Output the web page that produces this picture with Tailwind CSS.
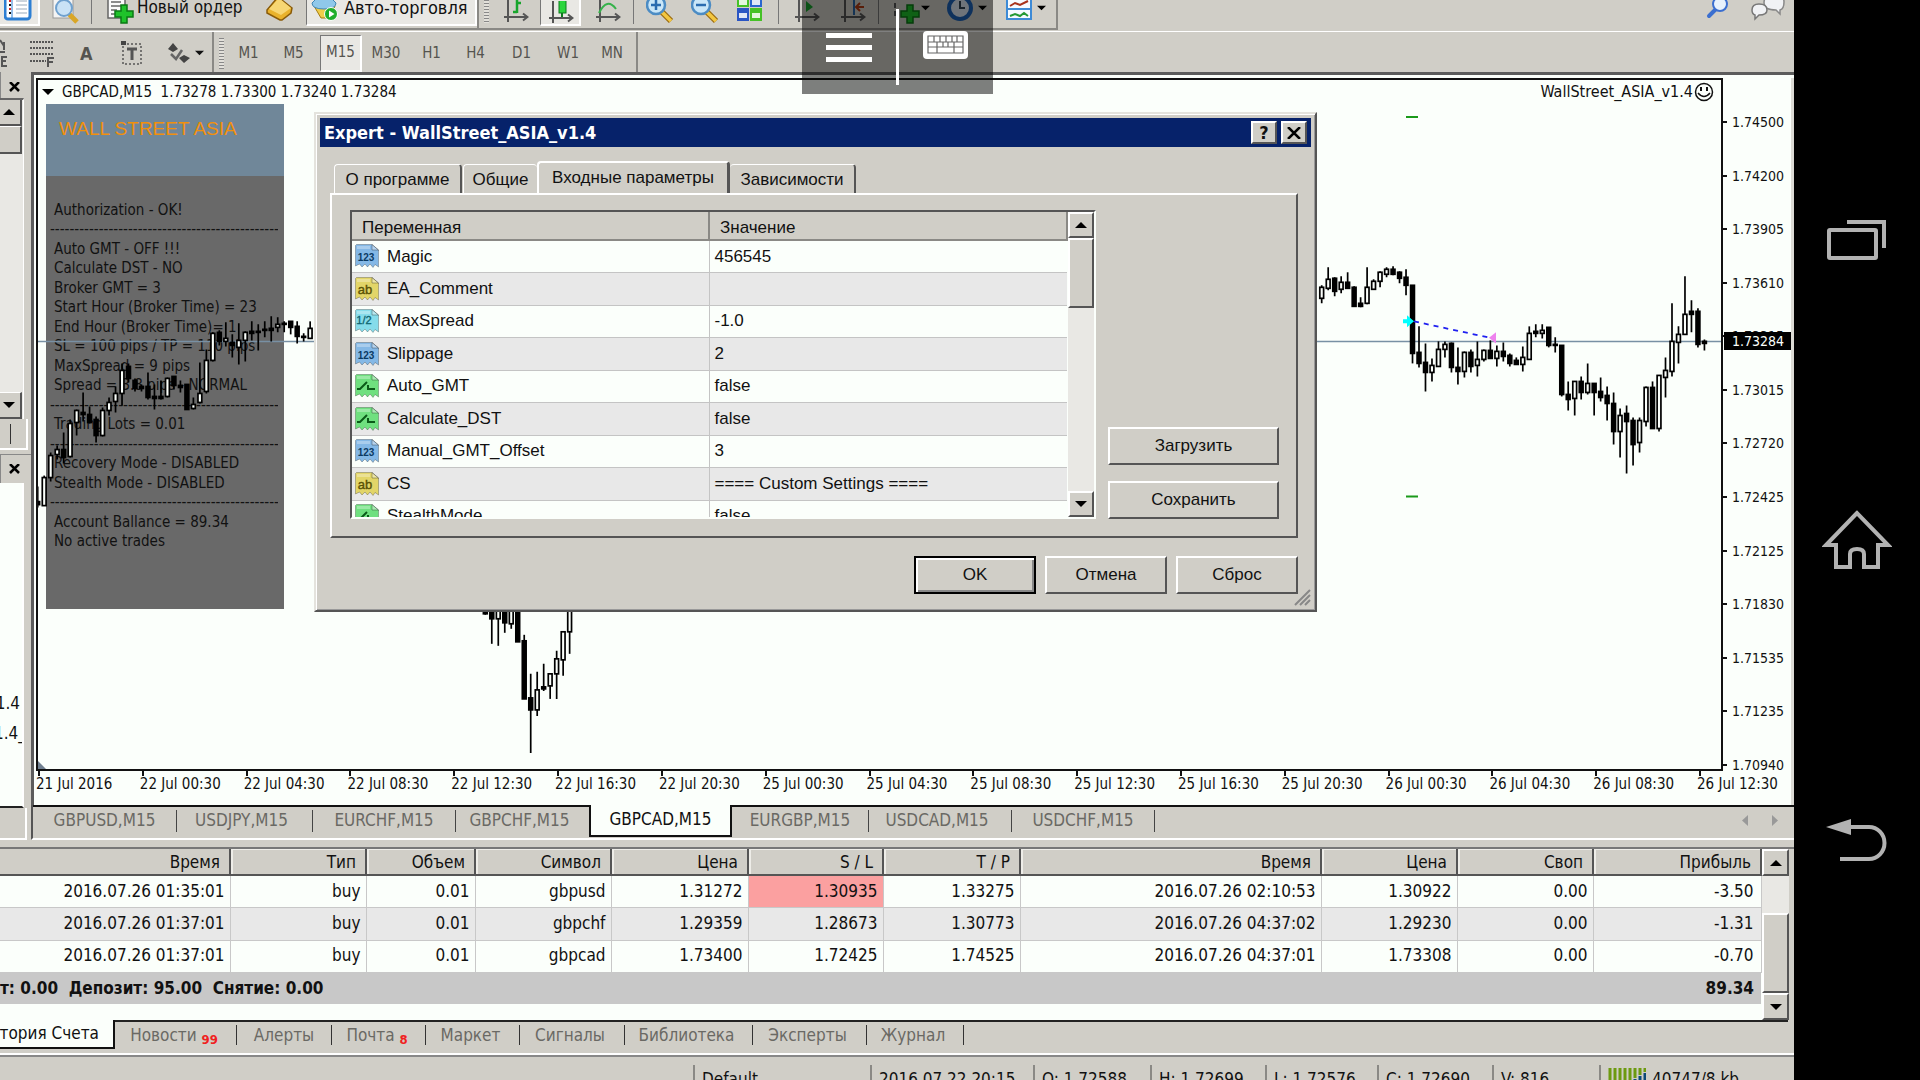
<!DOCTYPE html>
<html lang="ru">
<head>
  <meta charset="UTF-8" />
  <title>GBPCAD,M15</title>
  <script src="https://cdn.jsdelivr.net/npm/@tailwindcss/browser@4"></script>
</head>
<body class="flex h-screen overflow-hidden bg-black font-['DejaVu_Sans_Condensed','DejaVu_Sans',sans-serif] text-[17px] text-[#111]">

  <!-- shared icons -->
  <svg class="hidden">
    <symbol id="sheet" viewBox="0 0 26 26">
      <path d="M2.500 1.500H18L24.500 7V24L21 21.500L19 24.500L16 21L13.500 24L11 21L8 24L5.500 21L1.500 23V2.500Z" fill="currentColor" stroke="#000" stroke-opacity=".25" />
      <path d="M18 1.500L18 7H24.500Z" fill="#fff" fill-opacity=".4" stroke="#000" stroke-opacity=".3" />
      <path d="M3 3H16V6H3Z" fill="#fff" fill-opacity=".3" />
    </symbol>
    <symbol id="ico-int" viewBox="0 0 26 26">
      <use href="#sheet" color="#84b8e6" />
      <text x="12" y="18" font-size="10" font-weight="bold" text-anchor="middle" fill="#0b3a63">123</text>
    </symbol>
    <symbol id="ico-str" viewBox="0 0 26 26">
      <use href="#sheet" color="#e2d568" />
      <text x="11" y="18" font-size="13" text-anchor="middle" fill="#5a5205" stroke="#5a5205" stroke-width=".4">ab</text>
    </symbol>
    <symbol id="ico-dbl" viewBox="0 0 26 26">
      <use href="#sheet" color="#86dcea" />
      <text x="10" y="16" font-size="11" text-anchor="middle" fill="#0d6470" stroke="#0d6470" stroke-width=".3">1/2</text>
    </symbol>
    <symbol id="ico-bool" viewBox="0 0 26 26">
      <use href="#sheet" color="#6fe07f" />
      <path d="M3 16H6L13 9M14 12V16H21" fill="none" stroke="#0a5a18" stroke-width="2" />
    </symbol>
    <symbol id="up" viewBox="0 0 12 8"><path d="M6 1L12 7H0Z" /></symbol>
    <symbol id="down" viewBox="0 0 12 8"><path d="M0 1H12L6 7Z" /></symbol>
    <symbol id="axes" viewBox="0 0 26 28">
      <path d="M5 0V27M1 22H24M20 18.500L24.500 22L20 25.500" fill="none" stroke="#555" stroke-width="2" />
    </symbol>
    <symbol id="lens" viewBox="0 0 28 28">
      <path d="M16 15L25 24" stroke="#9a6c10" stroke-width="6" />
      <path d="M16 15L25 24" stroke="#f3c741" stroke-width="3.500" />
      <circle cx="10" cy="8" r="9" fill="#c9e6f8" stroke="#4c8cc4" stroke-width="2.500" />
    </symbol>
    <symbol id="plus" viewBox="0 0 20 20">
      <path d="M7 1H13V7H19V13H13V19H7V13H1V7H7Z" fill="#1fc32a" stroke="#0a7a14" stroke-width="1.500" />
    </symbol>
  </svg>

  <main class="relative flex min-w-0 flex-1 flex-col overflow-hidden bg-[#d0cec7]">

    <!-- main toolbar -->
    <div class="flex h-[31px] shrink-0 items-start">
      <div class="flex h-[30px] w-[479px] shrink-0 items-start border-r-2 border-b-2 border-[#8a8985]">
        <button aria-label="Обзор рынка" class="h-[26px] w-[40px] border-r-2 border-b-2 border-white bg-[#e9e8e4]">
          <svg class="ml-1 h-[26px] w-[28px]" viewBox="0 0 28 26"><rect x="1" y="-8" width="25" height="27" rx="3" fill="#fff" stroke="#2d7fd3" stroke-width="3" /><path d="M8 -4V18" stroke="#2d7fd3" stroke-width="1" /><path d="M12 1H23M12 5H23M12 9H23M12 13H23" stroke="#9ab" stroke-width="1" /><path d="M5 1h2M5 9h2" stroke="#d22" stroke-width="2" /><path d="M5 5h2M5 13h2" stroke="#111" stroke-width="2" /></svg>
        </button>
        <button aria-label="Окно данных" class="ml-3 h-[26px] w-[28px]">
          <svg class="h-[26px] w-[28px]" viewBox="0 0 28 26"><rect x="1" y="-8" width="20" height="26" fill="#f4f4f4" stroke="#999" /><path d="M17 14L25 22" stroke="#d9a627" stroke-width="5" /><circle cx="12" cy="8" r="8" fill="#c9e2f6" stroke="#6fa1cf" stroke-width="2" /></svg>
        </button>
        <span class="ml-[11px] h-[24px] w-px bg-[#777]"></span>
        <button class="ml-[15px] flex h-[26px] items-start gap-[3px] text-[17px] leading-[15px] whitespace-nowrap">
          <svg class="h-[26px] w-[27px]" viewBox="0 0 27 26"><path d="M1 -4H18V18H1Z" fill="#fafafa" stroke="#666" stroke-width="1.500" /><path d="M4 2H14M4 6H14M4 10H10M4 14H8" stroke="#666" stroke-width="1.500" /><use href="#plus" x="7" y="4" width="20" height="20" /></svg>
          Новый ордер
        </button>
        <button aria-label="MetaEditor" class="ml-auto h-[26px] w-[28px]">
          <svg class="h-[26px] w-[28px]" viewBox="0 0 28 26"><path d="M1 10L12 -3L26 8L25 13L16 20L14 20L1 13Z" fill="#e9b22c" stroke="#8a5b08" stroke-width="1.500" /><path d="M3 9L13 -2L25 8L15 15Z" fill="#f7d673" /></svg>
        </button>
        <button class="ml-3 flex h-[26px] w-[171px] items-start gap-[5px] border-r-2 border-b-2 border-l border-white border-l-[#777] bg-[#e9e8e4] pl-1 text-[18px] leading-[15px] whitespace-nowrap">
          <svg class="h-[26px] w-[28px] shrink-0" viewBox="0 0 28 26"><path d="M3 6L10 18H19L24 6Z" fill="#f1ce4b" stroke="#a57c10" /><path d="M1 3Q1 9 13 9Q25 9 25 3L20 -2H6Z" fill="#8fc8ea" stroke="#3f86b5" /><circle cx="20" cy="14" r="6.500" fill="#1fae2a" stroke="#fff" /><path d="M18 10.500V17.500L23.500 14Z" fill="#fff" /></svg>
          Авто-торговля
        </button>
      </div>
      <div class="flex h-[30px] w-[579px] shrink-0 items-start border-r-2 border-b-2 border-[#8a8985]">
        <span class="ml-[5px] h-[23px] w-[5px] bg-[repeating-linear-gradient(#888_0_1px,#e2e0da_1px_3px)]"></span>
        <button aria-label="Бары" class="ml-[14px] w-[26px]"><svg class="h-[22px] w-[26px]" viewBox="0 5 26 22"><use href="#axes" width="26" height="28" /><path d="M14 5V18M10 17H14M14 8H18" fill="none" stroke="#18a52c" stroke-width="2.500" /></svg></button>
        <button aria-label="Свечи" class="ml-[11px] h-[26px] w-[41px] border-r-2 border-b-2 border-l border-white border-l-[#777] bg-[#e9e8e4]"><svg class="ml-[7px] h-[22px] w-[26px]" viewBox="0 5 26 22"><use href="#axes" width="26" height="28" /><path d="M14 10V21" stroke="#0d7d1c" stroke-width="2" /><rect x="11" y="2" width="7" height="15" fill="#2bd63c" stroke="#0d7d1c" /></svg></button>
        <button aria-label="Линия" class="ml-[14px] w-[26px]"><svg class="h-[22px] w-[26px]" viewBox="0 5 26 22"><use href="#axes" width="26" height="28" /><path d="M4 18Q12 2 21 14" fill="none" stroke="#35b24a" stroke-width="2" /></svg></button>
        <span class="ml-[12px] h-[24px] w-px bg-[#777]"></span>
        <button aria-label="Увеличить" class="ml-[12px]"><svg class="h-[26px] w-[28px]" viewBox="0 3 28 26"><use href="#lens" width="28" height="28" /><path d="M5 8H15M10 3V13" stroke="#2a6cb0" stroke-width="2.500" /></svg></button>
        <button aria-label="Уменьшить" class="ml-[17px]"><svg class="h-[26px] w-[28px]" viewBox="0 3 28 26"><use href="#lens" width="28" height="28" /><path d="M5 8H15" stroke="#2a6cb0" stroke-width="2.500" /></svg></button>
        <button aria-label="Упорядочить" class="ml-[17px]"><svg class="h-[26px] w-[28px]" viewBox="0 0 28 26"><path d="M1 -5H13V7H1Z" fill="#45c126" /><path d="M14 -5H26V7H14Z" fill="#2a66cf" /><path d="M1 8H13V21H1Z" fill="#2a55c4" /><path d="M14 8H26V21H14Z" fill="#45c126" /><path d="M3 0H11V5H3ZM16 0H24V5H16ZM3 13H11V18H3ZM16 13H24V18H16Z" fill="#fff" fill-opacity=".85" /></svg></button>
        <span class="ml-[14px] h-[24px] w-px bg-[#777]"></span>
        <button aria-label="Автопрокрутка" class="ml-[15px]"><svg class="h-[22px] w-[26px]" viewBox="0 5 26 22"><use href="#axes" width="26" height="28" /><path d="M12 6V17L19 12Z" fill="#18a52c" /></svg></button>
        <button aria-label="Сдвиг графика" class="ml-[20px]"><svg class="h-[22px] w-[26px]" viewBox="0 5 26 22"><use href="#axes" width="26" height="28" /><path d="M14 4V20" stroke="#2a66a8" stroke-width="2" /><path d="M24 12H17M20 8L16 12L20 16" fill="none" stroke="#b03a12" stroke-width="2" /></svg></button>
        <span class="ml-[12px] h-[24px] w-px bg-[#777]"></span>
        <button aria-label="Индикаторы" class="ml-[15px] flex"><svg class="h-[26px] w-[27px]" viewBox="0 0 27 26"><path d="M1 16V-2H16" fill="none" stroke="#555" stroke-width="2" stroke-dasharray="5 3" /><use href="#plus" x="6" y="4" width="20" height="20" /></svg><svg class="mt-1 h-2 w-[9px]"><use href="#down" /></svg></button>
        <button aria-label="Периоды" class="ml-[17px] flex gap-1"><svg class="h-[26px] w-[27px]" viewBox="0 0 27 26"><circle cx="13" cy="8" r="11" fill="#dfe9f5" stroke="#1c62b8" stroke-width="4" /><path d="M13 1V8H18" fill="none" stroke="#345" stroke-width="2" /></svg><svg class="mt-1 h-2 w-[9px]"><use href="#down" /></svg></button>
        <button aria-label="Шаблоны" class="ml-[19px] flex gap-1"><svg class="h-[26px] w-[27px]" viewBox="0 0 27 26"><rect x="1" y="-6" width="24" height="25" fill="#f6faff" stroke="#3d8ad6" stroke-width="2" /><path d="M1 9H25" stroke="#3d8ad6" stroke-width="2" /><path d="M4 6L9 3L14 5L22 1" fill="none" stroke="#a8321c" stroke-width="2" /><path d="M4 16L9 14L14 16L18 13L22 16" fill="none" stroke="#259a35" stroke-width="2" /></svg><svg class="mt-1 h-2 w-[9px]"><use href="#down" /></svg></button>
      </div>
      <div class="ml-auto flex gap-[20px] pr-[8px]">
        <button aria-label="Поиск"><svg class="h-[22px] w-[24px]" viewBox="0 0 24 22"><path d="M3 16L10 9" stroke="#3b6fd0" stroke-width="4" stroke-linecap="round" /><circle cx="14" cy="4" r="7" fill="#e8f2fd" stroke="#3b6fd0" stroke-width="2" /></svg></button>
        <button aria-label="Сообщения"><svg class="h-[22px] w-[36px]" viewBox="0 0 36 22"><path d="M14 3Q14 -6 24 -6Q34 -6 34 2Q34 9 30 10L30 14L26 10Q14 10 14 3Z" fill="#f1f2f5" stroke="#888" stroke-width="1.500" /><path d="M2 10Q2 4 9 4Q17 4 17 10Q17 15 9 15L5 19V15Q2 14 2 10Z" fill="#f1f2f5" stroke="#777" stroke-width="1.500" /></svg></button>
      </div>
    </div>

    <!-- drawing tools and timeframes -->
    <div class="flex h-[41px] shrink-0 border-t border-white text-[15px] text-[#55544f]">
      <div class="flex w-[214px] shrink-0 items-center border-r-2 border-[#8a8985] pt-[2px]">
        <button aria-label="Равноудаленный канал" class="w-2"><svg class="h-[30px] w-2" viewBox="0 0 8 30"><path d="M0 2L4 8M0 14H5M4 4V12" stroke="#555" stroke-width="2" /><path d="M7 19H2V28H7M2 23H6" fill="none" stroke="#555" stroke-width="2" /></svg></button>
        <button aria-label="Фибоначчи" class="ml-[22px]"><svg class="h-[30px] w-[25px]" viewBox="0 0 25 30"><path d="M0 4H24M0 10H24M0 16H24M0 23H16" stroke="#555" stroke-width="2" stroke-dasharray="2 1" /><path d="M18 29V20H24M18 24H23" fill="none" stroke="#555" stroke-width="2" /></svg></button>
        <button class="ml-[25px] text-[18px] font-bold" aria-label="Текст">A</button>
        <button aria-label="Метка" class="ml-[28px]"><svg class="h-[26px] w-[22px]" viewBox="0 0 22 26"><rect x="2" y="4" width="18" height="20" fill="none" stroke="#555" stroke-width="1.500" stroke-dasharray="2 2" /><path d="M6 9H16M11 9V20" stroke="#555" stroke-width="3" /><path d="M0 1H5V5H0Z" fill="#444" /></svg></button>
        <button aria-label="Стрелки" class="ml-[24px] flex items-center gap-1"><svg class="h-[24px] w-[24px]" viewBox="0 0 24 24"><path d="M6 2L11 8L6 11L1 8ZM17 14L23 17L17 22L12 17Z" fill="#444" /><path d="M4 13L9 18L15 9" fill="none" stroke="#666" stroke-width="2.500" /></svg><svg class="h-2 w-[9px]" fill="#111"><use href="#down" /></svg></button>
      </div>
      <div class="flex w-[424px] shrink-0 items-center border-r-2 border-[#8a8985] pt-[2px] pl-[5px]">
        <span class="h-[31px] w-[5px] bg-[repeating-linear-gradient(#888_0_1px,#e2e0da_1px_3px)]"></span>
        <button class="ml-[2px] w-[45px]">M1</button>
        <button class="w-[45px]">M5</button>
        <button class="ml-[4px] h-[37px] w-[42px] border-t border-r-2 border-b-2 border-l border-white border-t-[#777] border-l-[#777] bg-[#e9e8e4]">M15</button>
        <button class="w-[48px]">M30</button>
        <button class="w-[43px]">H1</button>
        <button class="w-[45px]">H4</button>
        <button class="w-[47px]">D1</button>
        <button class="w-[46px]">W1</button>
        <button class="w-[42px]">MN</button>
      </div>
    </div>

    <!-- workspace -->
    <div class="flex min-h-0 flex-1 pb-[7px]">
      <aside class="flex w-[31px] shrink-0 flex-col">
        <div class="flex h-[26px] items-center border-l border-[#888] pt-1 pl-2">
          <button aria-label="Закрыть"><svg class="h-[10px] w-[11px]" viewBox="0 0 11 10"><path d="M1 0L10 9M10 0L1 9" stroke="#000" stroke-width="2.500" /></svg></button>
        </div>
        <div class="flex h-[321px] w-[24px] flex-col border-t-2 border-r border-t-[#666] border-r-white bg-[#e9e8e4]">
          <button aria-label="Вверх" class="flex h-[26px] w-[22px] items-center border-r-2 border-b-2 border-[#555] bg-[#d0cec7] pl-[3px]"><svg class="h-2 w-3"><use href="#up" /></svg></button>
          <span class="h-[28px] w-[22px] border-t border-r-2 border-b-2 border-[#555] border-t-white bg-[#d0cec7]"></span>
          <button aria-label="Вниз" class="mt-auto flex h-[27px] w-[22px] items-center border-t border-r-2 border-b-2 border-[#555] border-t-white bg-[#d0cec7] pl-[3px]"><svg class="h-2 w-3"><use href="#down" /></svg></button>
        </div>
        <div class="flex h-[31px] w-[28px] items-center border-r-2 border-b-2 border-white pl-[10px]"><span class="h-[20px] w-px bg-[#333]"></span></div>
        <div class="mt-[4px] flex h-[29px] items-center border-t border-l border-[#888] pl-2">
          <button aria-label="Закрыть"><svg class="h-[10px] w-[11px]" viewBox="0 0 11 10"><path d="M1 0L10 9M10 0L1 9" stroke="#000" stroke-width="2.500" /></svg></button>
        </div>
        <div class="flex min-h-0 w-[24px] flex-1 flex-col overflow-hidden border-r-2 border-b-2 border-r-white border-b-[#222] bg-[#fbfffb] pt-[205px] leading-[30px]">
          <span class="flex h-[30px] w-[20px] justify-end whitespace-nowrap">v1.4</span>
          <span class="flex h-[30px] w-[26px] justify-end whitespace-nowrap">v1.4_</span>
        </div>
        <div class="h-[32px] w-[27px] border-r-2 border-b-2 border-white"></div>
      </aside>

      <section class="flex min-w-0 flex-1 flex-col">
        <div class="grid min-h-0 flex-1 grid-cols-[1fr_71px] grid-rows-[1fr_34px] border-t-3 border-l-3 border-[#5c5c5c] bg-[#fbfffb] pt-[3px] pl-[2px] text-[15px]">
          <div class="relative border-2 border-[#111]">
            <div class="flex h-[24px] items-center justify-between pr-[7px] pl-[4px]">
              <p class="flex items-center gap-2 whitespace-pre"><svg class="h-2 w-3"><use href="#down" /></svg>GBPCAD,M15  1.73278 1.73300 1.73240 1.73284</p>
              <p class="flex items-center gap-px text-[16px]">WallStreet_ASIA_v1.4<svg class="h-[20px] w-[20px]" viewBox="0 0 20 20"><circle cx="10" cy="10" r="8.500" fill="none" stroke="#111" stroke-width="1.500" /><path d="M7 5V9M13 5V9" stroke="#111" stroke-width="2" /><path d="M4 11Q10 18 16 11" fill="none" stroke="#111" stroke-width="1.500" /></svg></p>
            </div>

            <!-- expert status panel -->
            <div class="ml-[8px] h-[505px] w-[238px] bg-[#696969]">
              <h2 class="h-[72px] bg-[#708799] pt-[12px] pl-[13px] font-['Liberation_Sans',sans-serif] text-[19px] leading-[26px] whitespace-nowrap text-[#f2900c]">WALL STREET ASIA</h2>
              <div class="mt-[25px] flex h-[350px] flex-col justify-between pl-[8px] leading-[19px] whitespace-nowrap">
                <p>Authorization - OK!</p>
                <p class="-ml-[4px] w-[228px] overflow-hidden">------------------------------------------------------------</p>
                <p>Auto GMT - OFF !!!</p>
                <p>Calculate DST - NO</p>
                <p>Broker GMT = 3</p>
                <p>Start Hour (Broker Time) = 23</p>
                <p>End Hour (Broker Time)= 1</p>
                <p>SL = 100 pips / TP = 110 pips</p>
                <p>MaxSpread = 9 pips</p>
                <p>Spread = 3.8 pips - NORMAL</p>
                <p class="-ml-[4px] w-[228px] overflow-hidden">------------------------------------------------------------</p>
                <p>Trading Lots = 0.01</p>
                <p class="-ml-[4px] w-[228px] overflow-hidden">------------------------------------------------------------</p>
                <p>Recovery Mode - DISABLED</p>
                <p>Stealth Mode - DISABLED</p>
                <p class="-ml-[4px] w-[228px] overflow-hidden">------------------------------------------------------------</p>
                <p>Account Ballance = 89.34</p>
                <p>No active trades</p>
              </div>
            </div>

            <svg id="chart" class="absolute inset-0 h-full w-full" viewBox="38 80 1683 688" preserveAspectRatio="none">
              <path d="M38 341H1721" stroke="#7890a4" stroke-width="1.500" />
              <g id="candles" stroke="#000" stroke-width="1.700"></g>
              <path d="M1406 117H1418M1406 496H1418" stroke="#1a9a1a" stroke-width="2" />
              <path d="M1414 321L1488 337" stroke="#2020f0" stroke-width="1.800" stroke-dasharray="5 5" />
              <path d="M1403 319H1407V315L1414 321L1407 327V323H1403Z" fill="#0ff" />
              <path d="M1496 332V343L1489 337.500Z" fill="#ee82ee" />
              <path d="M38 760L46 768H38Z" fill="#708090" />
            </svg>
          </div>

          <div class="relative border-r-3 border-[#dcdbd5] text-[14px]">
            <ol class="-ml-[2px] flex h-[calc(100%+4px)] flex-col justify-between pt-[34px] leading-[20px]">
              <li class="flex items-center gap-[5px]"><i class="h-[2px] w-[6px] bg-[#111]"></i>1.74500</li>
              <li class="flex items-center gap-[5px]"><i class="h-[2px] w-[6px] bg-[#111]"></i>1.74200</li>
              <li class="flex items-center gap-[5px]"><i class="h-[2px] w-[6px] bg-[#111]"></i>1.73905</li>
              <li class="flex items-center gap-[5px]"><i class="h-[2px] w-[6px] bg-[#111]"></i>1.73610</li>
              <li class="flex items-center gap-[5px]"><i class="h-[2px] w-[6px] bg-[#111]"></i>1.73315</li>
              <li class="flex items-center gap-[5px]"><i class="h-[2px] w-[6px] bg-[#111]"></i>1.73015</li>
              <li class="flex items-center gap-[5px]"><i class="h-[2px] w-[6px] bg-[#111]"></i>1.72720</li>
              <li class="flex items-center gap-[5px]"><i class="h-[2px] w-[6px] bg-[#111]"></i>1.72425</li>
              <li class="flex items-center gap-[5px]"><i class="h-[2px] w-[6px] bg-[#111]"></i>1.72125</li>
              <li class="flex items-center gap-[5px]"><i class="h-[2px] w-[6px] bg-[#111]"></i>1.71830</li>
              <li class="flex items-center gap-[5px]"><i class="h-[2px] w-[6px] bg-[#111]"></i>1.71535</li>
              <li class="flex items-center gap-[5px]"><i class="h-[2px] w-[6px] bg-[#111]"></i>1.71235</li>
              <li class="flex items-center gap-[5px]"><i class="h-[2px] w-[6px] bg-[#111]"></i>1.70940</li>
            </ol>
            <span class="absolute top-[254px] right-0 left-px h-[18px] bg-black pl-[8px] leading-[18px] text-[#fbfffb]">1.73284</span>
          </div>

          <ol class="col-span-2 flex border-r-3 border-[#dcdbd5] pr-[94px] leading-[17px] whitespace-nowrap">
            <li class="flex-1 basis-0"><i class="ml-[2px] block h-[5px] w-[2px] bg-[#111]"></i>21 Jul 2016</li>
            <li class="flex-1 basis-0"><i class="ml-[2px] block h-[5px] w-[2px] bg-[#111]"></i>22 Jul 00:30</li>
            <li class="flex-1 basis-0"><i class="ml-[2px] block h-[5px] w-[2px] bg-[#111]"></i>22 Jul 04:30</li>
            <li class="flex-1 basis-0"><i class="ml-[2px] block h-[5px] w-[2px] bg-[#111]"></i>22 Jul 08:30</li>
            <li class="flex-1 basis-0"><i class="ml-[2px] block h-[5px] w-[2px] bg-[#111]"></i>22 Jul 12:30</li>
            <li class="flex-1 basis-0"><i class="ml-[2px] block h-[5px] w-[2px] bg-[#111]"></i>22 Jul 16:30</li>
            <li class="flex-1 basis-0"><i class="ml-[2px] block h-[5px] w-[2px] bg-[#111]"></i>22 Jul 20:30</li>
            <li class="flex-1 basis-0"><i class="ml-[2px] block h-[5px] w-[2px] bg-[#111]"></i>25 Jul 00:30</li>
            <li class="flex-1 basis-0"><i class="ml-[2px] block h-[5px] w-[2px] bg-[#111]"></i>25 Jul 04:30</li>
            <li class="flex-1 basis-0"><i class="ml-[2px] block h-[5px] w-[2px] bg-[#111]"></i>25 Jul 08:30</li>
            <li class="flex-1 basis-0"><i class="ml-[2px] block h-[5px] w-[2px] bg-[#111]"></i>25 Jul 12:30</li>
            <li class="flex-1 basis-0"><i class="ml-[2px] block h-[5px] w-[2px] bg-[#111]"></i>25 Jul 16:30</li>
            <li class="flex-1 basis-0"><i class="ml-[2px] block h-[5px] w-[2px] bg-[#111]"></i>25 Jul 20:30</li>
            <li class="flex-1 basis-0"><i class="ml-[2px] block h-[5px] w-[2px] bg-[#111]"></i>26 Jul 00:30</li>
            <li class="flex-1 basis-0"><i class="ml-[2px] block h-[5px] w-[2px] bg-[#111]"></i>26 Jul 04:30</li>
            <li class="flex-1 basis-0"><i class="ml-[2px] block h-[5px] w-[2px] bg-[#111]"></i>26 Jul 08:30</li>
            <li class="w-0"><i class="ml-[2px] block h-[5px] w-[2px] bg-[#111]"></i>26 Jul 12:30</li>
          </ol>
        </div>

        <!-- chart tabs -->
        <nav class="flex h-[35px] shrink-0 border-b-2 border-l-2 border-white border-l-[#555] text-[17px] whitespace-nowrap text-[#6a6964]">
          <div class="flex flex-1 items-center border-t-2 border-[#111] pb-[4px]">
            <button class="w-[143px]">GBPUSD,M15</button><span class="h-[22px] w-px bg-[#444]"></span>
            <button class="w-[135px] pr-[6px]">USDJPY,M15</button><span class="h-[22px] w-px bg-[#444]"></span>
            <button class="w-[142px]">EURCHF,M15</button><span class="h-[22px] w-px bg-[#444]"></span>
            <button class="w-[133px] pr-[6px]">GBPCHF,M15</button>
            <button class="-mt-[2px] -mb-[3px] w-[143px] self-stretch border-r-2 border-b-2 border-l-2 border-[#111] bg-[#fbfffb] text-[#111]">GBPCAD,M15</button>
            <button class="w-[136px]">EURGBP,M15</button><span class="h-[22px] w-px bg-[#444]"></span>
            <button class="w-[142px] pr-[6px]">USDCAD,M15</button><span class="h-[22px] w-px bg-[#444]"></span>
            <button class="w-[142px]">USDCHF,M15</button><span class="h-[22px] w-px bg-[#444]"></span>
            <button aria-label="Назад" class="ml-auto"><svg class="h-[11px] w-[6px]" viewBox="0 0 6 11"><path d="M6 0V11L0 5.500Z" fill="#999" /></svg></button>
            <button aria-label="Вперед" class="mr-[16px] ml-[24px]"><svg class="h-[11px] w-[6px]" viewBox="0 0 6 11"><path d="M0 0V11L6 5.500Z" fill="#999" /></svg></button>
          </div>
        </nav>
      </section>
    </div>

    <!-- terminal -->
    <section class="shrink-0 border-t-2 border-[#777]">
      <div class="flex pr-[5px]">
        <div class="min-w-0 flex-1 bg-[#fbfffb] pb-[16px] text-[17px]">
          <table class="w-full table-fixed border-collapse text-right whitespace-nowrap">
            <colgroup>
              <col class="w-[230px]" /><col class="w-[136px]" /><col class="w-[109px]" /><col class="w-[136px]" /><col class="w-[137px]" /><col class="w-[135px]" /><col class="w-[137px]" /><col class="w-[301px]" /><col class="w-[136px]" /><col class="w-[136px]" /><col />
            </colgroup>
            <thead>
              <tr class="h-[26px] border-b-2 border-[#555] bg-[#d0cec7] leading-[24px]">
                <th class="border-r-2 border-[#555] p-0 pr-[9px] font-normal">Время</th>
                <th class="border-r-2 border-[#555] p-0 pr-[9px] font-normal shadow-[inset_2px_1px_#eeede8]">Тип</th>
                <th class="border-r-2 border-[#555] p-0 pr-[9px] font-normal shadow-[inset_2px_1px_#eeede8]">Объем</th>
                <th class="border-r-2 border-[#555] p-0 pr-[9px] font-normal shadow-[inset_2px_1px_#eeede8]">Символ</th>
                <th class="border-r-2 border-[#555] p-0 pr-[9px] font-normal shadow-[inset_2px_1px_#eeede8]">Цена</th>
                <th class="border-r-2 border-[#555] p-0 pr-[9px] font-normal shadow-[inset_2px_1px_#eeede8]">S / L</th>
                <th class="border-r-2 border-[#555] p-0 pr-[9px] font-normal shadow-[inset_2px_1px_#eeede8]">T / P</th>
                <th class="border-r-2 border-[#555] p-0 pr-[9px] font-normal shadow-[inset_2px_1px_#eeede8]">Время</th>
                <th class="border-r-2 border-[#555] p-0 pr-[9px] font-normal shadow-[inset_2px_1px_#eeede8]">Цена</th>
                <th class="border-r-2 border-[#555] p-0 pr-[9px] font-normal shadow-[inset_2px_1px_#eeede8]">Своп</th>
                <th class="border-r-2 border-[#555] p-0 pr-[9px] font-normal shadow-[inset_2px_1px_#eeede8]">Прибыль</th>
              </tr>
            </thead>
            <tbody>
              <tr class="h-[32px] border-b border-[#c8c8c8] *:border-r *:border-[#c8c8c8] *:p-0 *:pr-[5px]">
                <td>2016.07.26 01:35:01</td><td>buy</td><td>0.01</td><td>gbpusd</td><td>1.31272</td><td class="bg-[#fba0a0]">1.30935</td><td>1.33275</td><td>2016.07.26 02:10:53</td><td>1.30922</td><td>0.00</td><td class="pr-[7px]!">-3.50</td>
              </tr>
              <tr class="h-[33px] border-b border-[#c8c8c8] bg-[#e8e8e8] *:border-r *:border-[#c8c8c8] *:p-0 *:pr-[5px]">
                <td>2016.07.26 01:37:01</td><td>buy</td><td>0.01</td><td>gbpchf</td><td>1.29359</td><td>1.28673</td><td>1.30773</td><td>2016.07.26 04:37:02</td><td>1.29230</td><td>0.00</td><td class="pr-[7px]!">-1.31</td>
              </tr>
              <tr class="h-[32px] border-b border-[#c8c8c8] *:border-r *:border-[#c8c8c8] *:p-0 *:pr-[5px]">
                <td>2016.07.26 01:37:01</td><td>buy</td><td>0.01</td><td>gbpcad</td><td>1.73400</td><td>1.72425</td><td>1.74525</td><td>2016.07.26 04:37:01</td><td>1.73308</td><td>0.00</td><td class="pr-[7px]!">-0.70</td>
              </tr>
              <tr class="h-[32px] bg-[#c8c8c8] font-bold">
                <td colspan="10" class="p-0 text-left whitespace-pre">т: 0.00  Депозит: 95.00  Снятие: 0.00</td><td class="p-0 pr-[7px]">89.34</td>
              </tr>
            </tbody>
          </table>
        </div>
        <div class="flex w-[27px] flex-col bg-[#e9e8e4]">
          <button aria-label="Вверх" class="flex h-[27px] items-center justify-center border-2 border-[#555] border-t-white border-l-white bg-[#d0cec7]"><svg class="h-2 w-3"><use href="#up" /></svg></button>
          <span class="mt-[37px] flex-1 border-2 border-[#555] border-t-white border-l-white bg-[#d0cec7]"></span>
          <button aria-label="Вниз" class="flex h-[27px] items-center justify-center border-2 border-[#555] border-t-white border-l-white bg-[#d0cec7]"><svg class="h-2 w-3"><use href="#down" /></svg></button>
        </div>
      </div>
      <nav class="flex h-[33px] items-start text-[17px] leading-[26px] whitespace-nowrap text-[#6a6964]">
        <button class="flex h-[29px] w-[115px] justify-end overflow-hidden border-r-2 border-b-2 border-[#111] bg-[#fbfffb] pr-[14px] text-[#111]">История Счета</button>
        <div class="mr-[6px] flex h-[28px] flex-1 items-center border-t-2 border-[#222]">
          <button class="w-[121px] pr-[3px]">Новости <sub class="text-[13px] font-bold text-[#f02020]">99</sub></button><span class="h-[20px] w-px bg-[#333]"></span>
          <button class="w-[94px]">Алерты</button><span class="h-[20px] w-px bg-[#333]"></span>
          <button class="w-[93px] pr-[3px]">Почта <sub class="text-[13px] font-bold text-[#f02020]">8</sub></button><span class="h-[20px] w-px bg-[#333]"></span>
          <button class="w-[93px] pr-[4px]">Маркет</button><span class="h-[20px] w-px bg-[#333]"></span>
          <button class="w-[104px] pr-[4px]">Сигналы</button><span class="h-[20px] w-px bg-[#333]"></span>
          <button class="w-[127px] pr-[4px]">Библиотека</button><span class="h-[20px] w-px bg-[#333]"></span>
          <button class="w-[113px] pr-[4px]">Эксперты</button><span class="h-[20px] w-px bg-[#333]"></span>
          <button class="w-[96px] pr-[4px]">Журнал</button><span class="h-[20px] w-px bg-[#333]"></span>
        </div>
      </nav>
    </section>

    <!-- status bar -->
    <footer class="flex h-[27px] shrink-0 items-start border-t-2 border-white text-[17px] leading-[24px] whitespace-nowrap">
      <div class="flex w-full border-t-2 border-[#888] pt-[8px] *:border-l-2 *:border-[#8a8985] *:pt-[2px] *:pl-[7px]">
        <span class="ml-[693px] w-[177px]">Default</span>
        <span class="w-[163px]">2016.07.22 20:15</span>
        <span class="w-[117px]">O: 1.72588</span>
        <span class="w-[115px]">H: 1.72699</span>
        <span class="w-[112px]">L: 1.72576</span>
        <span class="w-[115px]">C: 1.72690</span>
        <span class="w-[107px]">V: 816</span>
        <span class="flex gap-[6px]"><svg class="h-[20px] w-[38px]" viewBox="0 0 38 20"><path d="M2 1V20M7 1V20M12 1V18M17 1V16M22 1V13M27 1V11M32 1V8M37 1V5" stroke="#6d9a10" stroke-width="3" /><path d="M17 17V20M22 14V20M27 12V20M32 9V20M37 6V20" stroke="#0d4a78" stroke-width="3" /></svg>40747/8 kb</span>
      </div>
    </footer>

    <!-- expert properties dialog -->
    <div role="dialog" aria-labelledby="dlgTitle" class="absolute top-[112px] left-[314px] flex h-[500px] w-[1003px] flex-col border-2 border-[#555] border-t-[#e4e3dd] border-l-[#e4e3dd] bg-[#d0cec7] p-[4px] font-['Liberation_Sans',sans-serif] shadow-[inset_1px_1px_#fff,inset_-1px_-1px_#999]">
      <div class="flex h-[29px] shrink-0 items-center gap-[4px] bg-[#06226a] pr-[4px] pl-[4px] font-['DejaVu_Sans_Condensed','DejaVu_Sans',sans-serif]">
        <h1 id="dlgTitle" class="mr-auto text-[18px] font-bold text-white">Expert - WallStreet_ASIA_v1.4</h1>
        <button aria-label="Справка" class="h-[23px] w-[26px] border-2 border-[#555] border-t-white border-l-white bg-[#d0cec7] text-[18px] leading-[19px] font-bold">?</button>
        <button aria-label="Закрыть" class="flex h-[23px] w-[26px] items-center justify-center border-2 border-[#555] border-t-white border-l-white bg-[#d0cec7]"><svg class="h-[12px] w-[14px]" viewBox="0 0 14 12"><path d="M1 0L13 12M13 0L1 12" stroke="#000" stroke-width="2.500" /></svg></button>
      </div>

      <div class="mt-[14px] flex shrink-0 items-end pl-[14px]">
        <button class="h-[29px] w-[128px] rounded-t-sm border-t border-r-2 border-l border-white border-r-[#555] pt-[2px]">О программе</button>
        <button class="ml-px h-[29px] w-[74px] rounded-t-sm border-t border-l border-white pt-[2px]">Общие</button>
        <button class="h-[32px] w-[193px] rounded-t-sm border-t-2 border-r-3 border-l-2 border-white border-r-[#555]">Входные параметры</button>
        <button class="h-[29px] w-[126px] rounded-t-sm border-t border-r-2 border-white border-r-[#555] pt-[2px]">Зависимости</button>
      </div>

      <div class="mr-[13px] ml-[10px] flex min-h-0 flex-1 gap-[12px] border-2 border-[#555] border-t-white border-l-white pt-[15px] pr-[17px] pb-[17px] pl-[18px]">
        <div class="flex flex-1 border-2 border-[#fbfffb] border-t-[#555] border-l-[#555] bg-[#fbfffb]">
          <div class="min-w-0 flex-1 overflow-hidden">
            <table class="w-full table-fixed border-collapse text-left">
              <colgroup><col class="w-[357px]" /><col /></colgroup>
              <thead>
                <tr class="h-[28px] border-b-2 border-[#8a8985] bg-[#d0cec7] leading-[23px]">
                  <th class="border-r-2 border-[#8a8985] p-0 pt-[3px] pl-[10px] font-normal">Переменная</th>
                  <th class="border-r-2 border-[#8a8985] p-0 pt-[3px] pl-[10px] font-normal">Значение</th>
                </tr>
              </thead>
              <tbody class="*:h-[32px] *:border-b *:border-[#c4c4c4] *:even:h-[33px] *:even:bg-[#e8e8e8]">
                <tr><td class="border-r border-[#c4c4c4] p-0 pl-[2px]"><span class="flex items-center gap-[7px]"><svg class="size-[26px]"><use href="#ico-int" /></svg>Magic</span></td><td class="p-0 pl-[5px]">456545</td></tr>
                <tr><td class="border-r border-[#c4c4c4] p-0 pl-[2px]"><span class="flex items-center gap-[7px]"><svg class="size-[26px]"><use href="#ico-str" /></svg>EA_Comment</span></td><td class="p-0 pl-[5px]"></td></tr>
                <tr><td class="border-r border-[#c4c4c4] p-0 pl-[2px]"><span class="flex items-center gap-[7px]"><svg class="size-[26px]"><use href="#ico-dbl" /></svg>MaxSpread</span></td><td class="p-0 pl-[5px]">-1.0</td></tr>
                <tr><td class="border-r border-[#c4c4c4] p-0 pl-[2px]"><span class="flex items-center gap-[7px]"><svg class="size-[26px]"><use href="#ico-int" /></svg>Slippage</span></td><td class="p-0 pl-[5px]">2</td></tr>
                <tr><td class="border-r border-[#c4c4c4] p-0 pl-[2px]"><span class="flex items-center gap-[7px]"><svg class="size-[26px]"><use href="#ico-bool" /></svg>Auto_GMT</span></td><td class="p-0 pl-[5px]">false</td></tr>
                <tr><td class="border-r border-[#c4c4c4] p-0 pl-[2px]"><span class="flex items-center gap-[7px]"><svg class="size-[26px]"><use href="#ico-bool" /></svg>Calculate_DST</span></td><td class="p-0 pl-[5px]">false</td></tr>
                <tr><td class="border-r border-[#c4c4c4] p-0 pl-[2px]"><span class="flex items-center gap-[7px]"><svg class="size-[26px]"><use href="#ico-int" /></svg>Manual_GMT_Offset</span></td><td class="p-0 pl-[5px]">3</td></tr>
                <tr><td class="border-r border-[#c4c4c4] p-0 pl-[2px]"><span class="flex items-center gap-[7px]"><svg class="size-[26px]"><use href="#ico-str" /></svg>CS</span></td><td class="p-0 pl-[5px]">==== Custom Settings ====</td></tr>
                <tr><td class="border-r border-[#c4c4c4] p-0 pl-[2px]"><span class="flex items-center gap-[7px]"><svg class="size-[26px]"><use href="#ico-bool" /></svg>StealthMode</span></td><td class="p-0 pl-[5px]">false</td></tr>
              </tbody>
            </table>
          </div>
          <div class="flex w-[26px] flex-col bg-[#e9e8e4]">
            <button aria-label="Вверх" class="flex h-[26px] items-center justify-center border-2 border-[#555] border-t-white border-l-white bg-[#d0cec7]"><svg class="h-2 w-3"><use href="#up" /></svg></button>
            <span class="h-[70px] border-2 border-[#555] border-t-white border-l-white bg-[#d0cec7]"></span>
            <button aria-label="Вниз" class="mt-auto flex h-[26px] items-center justify-center border-2 border-[#555] border-t-white border-l-white bg-[#d0cec7]"><svg class="h-2 w-3"><use href="#down" /></svg></button>
          </div>
        </div>
        <div class="flex w-[171px] flex-col justify-end gap-[16px]">
          <button class="h-[38px] border-2 border-[#555] border-t-white border-l-white">Загрузить</button>
          <button class="h-[38px] border-2 border-[#555] border-t-white border-l-white">Сохранить</button>
        </div>
      </div>

      <div class="mt-[18px] mr-[13px] mb-[12px] flex shrink-0 justify-end gap-[9px]">
        <button class="h-[38px] w-[122px] border-2 border-black shadow-[inset_2px_2px_#fff,inset_-2px_-2px_#888]">OK</button>
        <button class="h-[38px] w-[122px] border-2 border-[#555] border-t-white border-l-white">Отмена</button>
        <button class="h-[38px] w-[122px] border-2 border-[#555] border-t-white border-l-white">Сброс</button>
      </div>
      <svg class="absolute right-[4px] bottom-[4px] h-[17px] w-[17px]" viewBox="0 0 17 17"><path d="M1 16L16 1M6 16L16 6M11 16L16 11" stroke="#888" stroke-width="2" /></svg>
    </div>

    <!-- remote desktop handle -->
    <div class="absolute top-0 left-[802px] flex h-[94px] w-[191px] bg-black/50">
      <button aria-label="Меню" class="flex w-[94px] flex-col items-center gap-[7px] pt-[33px] *:h-[5px] *:w-[46px] *:bg-white"><span></span><span></span><span></span></button>
      <span class="mt-[9px] h-[76px] w-[3px] bg-white"></span>
      <button aria-label="Клавиатура" class="flex flex-1 justify-center pt-[31px] pr-[2px]">
        <svg class="h-[28px] w-[45px]" viewBox="0 0 45 28"><rect width="45" height="28" rx="4" fill="#fff" /><path d="M5 5H40V22H5ZM5 11H40M5 16H40M11 5V11M17 5V11M23 5V11M29 5V11M34 5V11M14 11V16M20 11V16M25 11V16M31 11V16M14 16V22M31 16V22" fill="none" stroke="#666" stroke-width="1.200" /></svg>
      </button>
    </div>
  </main>

  <!-- device navigation -->
  <nav class="flex w-[126px] shrink-0 flex-col items-center justify-between pt-[219px] pb-[218px]">
    <button aria-label="Недавние"><svg class="h-[42px] w-[62px]" viewBox="0 0 62 42" fill="none" stroke="#b2b2b2" stroke-width="4"><rect x="3" y="11" width="47" height="28" rx="1" /><path d="M21 3H58V29" /></svg></button>
    <button aria-label="Домой"><svg class="h-[62px] w-[70px]" viewBox="0 0 70 62" fill="none" stroke="#b2b2b2" stroke-width="4"><path d="M35 4L4 36H14V58H28V45Q28 40 35 40Q42 40 42 45V58H56V36H66Z" /></svg></button>
    <button aria-label="Назад"><svg class="h-[44px] w-[62px]" viewBox="0 0 62 44"><path d="M25 9H43A15.500 16 0 0 1 43 41H14" fill="none" stroke="#b2b2b2" stroke-width="4" /><path d="M0 9L25 1V17Z" fill="#b2b2b2" /></svg></button>
  </nav>

  <script>
    // each run: x of first bar, then [high, bodyTop, bodyBottom, low, hollow]
    const runs = [
      [37.7, [
        [486,501,504,507,0],[475,477,505,505,1],[452,455,477,481,1],[445,449,454,459,1],[432,449,457,463,0],
        [419,423,456,457,1],[409,410,422,435,1],[392,412,414,421,0],[406,414,422,423,0],[416,419,435,442,0],
        [407,410,435,436,1],[397,402,410,415,1],[386,393,401,412,1],[363,370,393,405,1],[363,366,378,382,0],
        [378,380,388,391,0],[384,386,388,391,0],[372,386,397,399,0],[384,396,398,409,0],[380,396,398,399,0],
        [377,378,396,397,1],[376,376,385,389,0],[380,385,387,392,0],[384,384,409,409,0],[397,404,408,409,1],
        [362,393,402,403,1],[349,360,391,393,1],[332,333,360,361,1],[330,332,341,345,0],[322,338,341,346,1],
        [334,342,345,357,0],[323,340,347,364,1],[331,332,340,361,1],[321,331,333,340,0],[324,331,332,350,0],
        [321,329,330,337,0],[316,328,330,341,0],[317,324,327,332,1],[321,323,324,332,0],[321,321,327,334,0],
        [321,326,336,343,0],[333,336,337,341,0],[321,328,338,338,1]
      ]],
      [485.3, [
        [606,612,613,614,0],[606,606,618,643,0],[606,606,618,645,1],[606,606,622,632,0],[606,606,623,628,1],
        [606,606,641,641,0],[634,640,698,698,0],[673,697,709,752,0],[671,689,709,715,1],[663,686,688,690,0],
        [673,673,685,698,1],[650,658,673,698,1],[631,631,659,675,1],[606,606,631,653,1]
      ]],
      [1321.7, [
        [285,287,298,303,1],[267,279,288,290,1],[277,278,291,296,0],[276,282,289,293,1],[272,282,288,288,0],
        [286,287,306,306,0],[297,303,306,307,0],[267,287,303,304,1],[279,281,289,289,1],[271,272,281,287,1],
        [267,269,274,277,1],[266,269,274,275,0],[271,272,278,283,0],[269,277,285,295,0],[285,285,353,363,0],
        [326,352,363,367,0],[343,362,372,391,0],[358,365,372,381,1],[341,349,366,366,1],[341,344,349,357,1],
        [342,343,367,372,0],[347,367,371,384,0],[351,352,371,377,1],[349,352,366,372,0],[341,359,365,376,1],
        [349,350,359,361,1],[340,350,358,358,0],[345,351,358,366,1],[342,351,356,361,0],[353,355,363,366,0],
        [357,360,364,364,0],[346,357,364,371,1],[326,333,359,359,1],[324,331,333,337,0],[324,330,333,338,1],
        [327,327,345,347,0],[337,344,345,352,0],[345,345,394,396,0],[381,394,399,410,0],[381,381,398,415,1],
        [376,381,392,399,0],[363,383,392,394,1],[383,383,392,415,0],[377,391,397,401,0],[386,395,403,420,0],
        [392,403,431,444,0],[408,415,431,457,1],[405,413,421,473,0],[417,420,444,465,0],[417,420,442,452,1],
        [386,387,421,426,1],[381,387,428,428,0],[375,375,428,431,1],[357,370,377,397,1],[303,341,371,376,1],
        [326,334,342,363,1],[276,314,334,334,1],[300,311,314,332,0],[308,311,344,347,0],[339,341,343,350,0]
      ]]
    ];
    const layer = document.getElementById('candles');
    let markup = '';
    runs.forEach(([start, bars]) => {
      bars.forEach(([high, top, bottom, low, hollow], i) => {
        const x = start + i * 6.487;
        markup += `<path d="M${x} ${high}V${top}M${x} ${bottom}V${low}" />`;
        markup += `<rect x="${x - 1.9}" y="${top}" width="3.8" height="${Math.max(bottom - top, 1)}" fill="${hollow ? '#fbfffb' : '#000'}" />`;
      });
    });
    layer.innerHTML = markup;
  </script>
</body>
</html>
